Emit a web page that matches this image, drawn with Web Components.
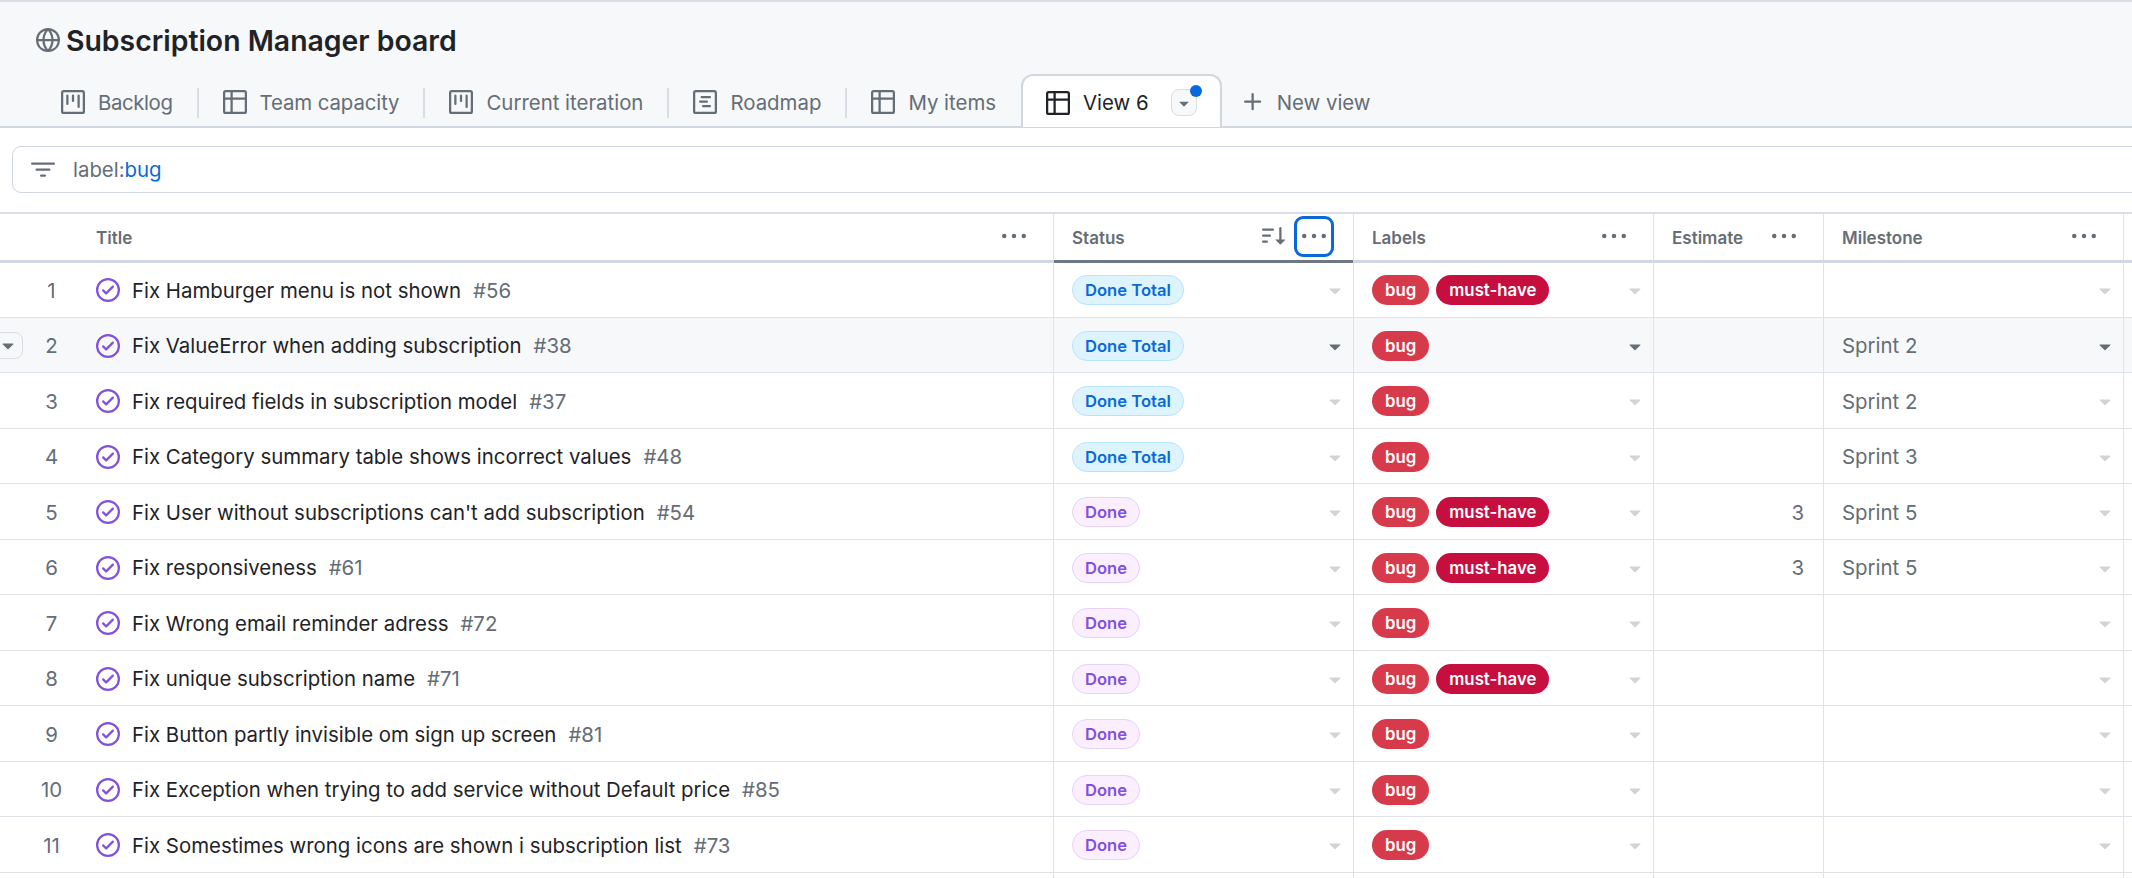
<!DOCTYPE html>
<html lang="en">
<head>
<meta charset="utf-8">
<title>Subscription Manager board</title>
<style>
  html, body { margin: 0; height: 878px; overflow: hidden; background: #fff; }
  body { font-family: Inter, "Liberation Sans", sans-serif; font-size: 20.4px; color: #1f2328; }
  view-tab:nth-child(1) { letter-spacing: -.4px; }
  view-tab:nth-child(2) { letter-spacing: -.1px; }
</style>
</head>
<body>
<board-header>Subscription Manager board</board-header>
<view-tabs>
  <view-tab icon="project">Backlog</view-tab>
  <view-tab icon="table">Team capacity</view-tab>
  <view-tab icon="project">Current iteration</view-tab>
  <view-tab icon="roadmap">Roadmap</view-tab>
  <view-tab icon="table" class="last">My items</view-tab>
  <view-tab icon="table" active>View 6</view-tab>
  <new-view>New view</new-view>
</view-tabs>
<filter-bar><span>label:</span><b>bug</b></filter-bar>
<issue-table>
  <issue-row n="1" issue="#56" status="Done Total" labels="bug,must-have">Fix Hamburger menu is not shown</issue-row>
  <issue-row n="2" issue="#38" status="Done Total" labels="bug" milestone="Sprint 2" hovered>Fix ValueError when adding subscription</issue-row>
  <issue-row n="3" issue="#37" status="Done Total" labels="bug" milestone="Sprint 2">Fix required fields in subscription model</issue-row>
  <issue-row n="4" issue="#48" status="Done Total" labels="bug" milestone="Sprint 3">Fix Category summary table shows incorrect values</issue-row>
  <issue-row n="5" issue="#54" status="Done" labels="bug,must-have" estimate="3" milestone="Sprint 5">Fix User without subscriptions can't add subscription</issue-row>
  <issue-row n="6" issue="#61" status="Done" labels="bug,must-have" estimate="3" milestone="Sprint 5">Fix responsiveness</issue-row>
  <issue-row n="7" issue="#72" status="Done" labels="bug">Fix Wrong email reminder adress</issue-row>
  <issue-row n="8" issue="#71" status="Done" labels="bug,must-have">Fix unique subscription name</issue-row>
  <issue-row n="9" issue="#81" status="Done" labels="bug">Fix Button partly invisible om sign up screen</issue-row>
  <issue-row n="10" issue="#85" status="Done" labels="bug">Fix Exception when trying to add service without Default price</issue-row>
  <issue-row n="11" issue="#73" status="Done" labels="bug">Fix Somestimes wrong icons are shown i subscription list</issue-row>
  <issue-row blank></issue-row>
</issue-table>

<script>
// octicons, 16 unit grid
const ICONS = {
  globe: 'M8 0a8 8 0 1 1 0 16A8 8 0 0 1 8 0ZM5.78 8.75a9.64 9.64 0 0 0 1.363 4.177c.255.426.542.832.857 1.215.245-.296.551-.705.857-1.215A9.64 9.64 0 0 0 10.22 8.75Zm4.44-1.5a9.64 9.64 0 0 0-1.363-4.177c-.307-.51-.612-.919-.857-1.215a9.927 9.927 0 0 0-.857 1.215A9.64 9.64 0 0 0 5.78 7.25Zm-5.944 1.5H1.543a6.507 6.507 0 0 0 4.666 5.5c-.123-.181-.24-.365-.352-.552-.715-1.192-1.437-2.874-1.581-4.948Zm-2.733-1.5h2.733c.144-2.074.866-3.756 1.58-4.948.12-.197.237-.381.353-.552a6.507 6.507 0 0 0-4.666 5.5Zm10.181 1.5c-.144 2.074-.866 3.756-1.58 4.948-.12.197-.237.381-.353.552a6.507 6.507 0 0 0 4.666-5.5Zm2.733-1.5a6.507 6.507 0 0 0-4.666-5.5c.123.181.24.365.353.552.714 1.192 1.436 2.874 1.58 4.948Z',
  project: 'M1.75 0h12.5C15.216 0 16 .784 16 1.75v12.5A1.75 1.75 0 0 1 14.25 16H1.75A1.75 1.75 0 0 1 0 14.25V1.75C0 .784.784 0 1.75 0ZM1.5 1.75v12.5c0 .138.112.25.25.25h12.5a.25.25 0 0 0 .25-.25V1.75a.25.25 0 0 0-.25-.25H1.75a.25.25 0 0 0-.25.25ZM11.75 3a.75.75 0 0 1 .75.75v7.5a.75.75 0 0 1-1.5 0v-7.5a.75.75 0 0 1 .75-.75Zm-8.25.75a.75.75 0 0 1 1.5 0v5.5a.75.75 0 0 1-1.5 0ZM8 3a.75.75 0 0 1 .75.75v3.5a.75.75 0 0 1-1.5 0v-3.5A.75.75 0 0 1 8 3Z',
  table: 'M0 1.75C0 .784.784 0 1.75 0h12.5C15.216 0 16 .784 16 1.75v12.5A1.75 1.75 0 0 1 14.25 16H1.75A1.75 1.75 0 0 1 0 14.25ZM6.5 6.5v8h7.75a.25.25 0 0 0 .25-.25V6.5Zm8-1.5V1.75a.25.25 0 0 0-.25-.25H6.5V5Zm-13 1.5v7.75c0 .138.112.25.25.25H5v-8ZM5 5V1.5H1.75a.25.25 0 0 0-.25.25V5Z',
  roadmap: 'M4.75 7a.75.75 0 0 0 0 1.5h4.5a.75.75 0 0 0 0-1.5h-4.5ZM5 4.75A.75.75 0 0 1 5.75 4h5.5a.75.75 0 0 1 0 1.5h-5.5A.75.75 0 0 1 5 4.75ZM6.75 10a.75.75 0 0 0 0 1.5h4.5a.75.75 0 0 0 0-1.5h-4.5ZM0 1.75C0 .784.784 0 1.75 0h12.5C15.216 0 16 .784 16 1.75v12.5A1.75 1.75 0 0 1 14.25 16H1.75A1.75 1.75 0 0 1 0 14.25ZM1.75 1.5a.25.25 0 0 0-.25.25v12.5c0 .138.112.25.25.25h12.5a.25.25 0 0 0 .25-.25V1.75a.25.25 0 0 0-.25-.25Z',
  filter: 'M.75 3h14.5a.75.75 0 0 1 0 1.5H.75a.75.75 0 0 1 0-1.5ZM3 7.75A.75.75 0 0 1 3.75 7h8.5a.75.75 0 0 1 0 1.5h-8.5A.75.75 0 0 1 3 7.75Zm3 4a.75.75 0 0 1 .75-.75h2.5a.75.75 0 0 1 0 1.5h-2.5a.75.75 0 0 1-.75-.75Z',
  plus: 'M7.75 2a.75.75 0 0 1 .75.75V7h4.25a.75.75 0 0 1 0 1.5H8.5v4.25a.75.75 0 0 1-1.5 0V8.5H2.75a.75.75 0 0 1 0-1.5H7V2.75A.75.75 0 0 1 7.75 2Z',
  kebab: 'M8 9.5a1.5 1.5 0 1 0 0-3 1.5 1.5 0 0 0 0 3ZM1.5 9.5a1.5 1.5 0 1 0 0-3 1.5 1.5 0 0 0 0 3Zm13 0a1.5 1.5 0 1 0 0-3 1.5 1.5 0 0 0 0 3Z',
  caret: 'm4.427 7.427 3.396 3.396a.25.25 0 0 0 .354 0l3.396-3.396A.25.25 0 0 0 11.396 7H4.604a.25.25 0 0 0-.177.427Z',
  check: 'M0 8a8 8 0 1 1 16 0A8 8 0 0 1 0 8Zm1.5 0a6.5 6.5 0 1 0 13 0 6.5 6.5 0 0 0-13 0Zm10.28-1.72-4.5 4.5a.75.75 0 0 1-1.06 0l-2-2a.751.751 0 0 1 .018-1.042.751.751 0 0 1 1.042-.018l1.47 1.47 3.97-3.97a.751.751 0 0 1 1.042.018.751.751 0 0 1 .018 1.042Z',
  sort: 'M0 3.75A.75.75 0 0 1 .75 3h6.5a.75.75 0 0 1 0 1.5H.75A.75.75 0 0 1 0 3.75Zm0 4A.75.75 0 0 1 .75 7h4.5a.75.75 0 0 1 0 1.5H.75A.75.75 0 0 1 0 7.75Zm0 4a.75.75 0 0 1 .75-.75h2.5a.75.75 0 0 1 0 1.5H.75a.75.75 0 0 1-.75-.75ZM12.25 2a.75.75 0 0 1 .75.75v7.5h2.2c.2 0 .3.25.17.4l-2.95 2.95a.25.25 0 0 1-.35 0L9.1 10.65a.23.23 0 0 1 .17-.4h2.23v-7.5a.75.75 0 0 1 .75-.75Z'
};

class GhIcon extends HTMLElement {
  constructor() {
    super();
    this.attachShadow({mode: 'open'});
    const size = this.getAttribute('size') || 24;
    this.shadowRoot.innerHTML = `
      <style>
        :host { display: block; flex: none; width: ${size}px; height: ${size}px; }
        svg { display: block; fill: currentColor; }
      </style>
      <svg width="${size}" height="${size}" viewBox="0 0 16 16"><path d="${ICONS[this.getAttribute('name')]}"/></svg>`;
  }
}
customElements.define('gh-icon', GhIcon);

class BoardHeader extends HTMLElement {
  constructor() {
    super();
    this.attachShadow({mode: 'open'});
    this.shadowRoot.innerHTML = `
      <style>
        :host {
          display: flex; align-items: center; gap: 6px;
          height: 72px; box-sizing: border-box;
          padding: 6px 0 0 36px;
          background: #f6f8fa;
          border-top: 2px solid #d8dee4;
        }
        gh-icon { color: #656d76; }
        h1 { margin: 0; font-size: 28.4px; font-weight: 600; color: #1f2328; }
      </style>
      <gh-icon name="globe"></gh-icon>
      <h1><slot></slot></h1>`;
  }
}
customElements.define('board-header', BoardHeader);

class ViewTabs extends HTMLElement {
  constructor() {
    super();
    this.attachShadow({mode: 'open'});
    this.shadowRoot.innerHTML = `
      <style>
        :host {
          display: flex; align-items: stretch;
          height: 56px; box-sizing: border-box;
          padding: 2px 0 0 36px;
          background: #f6f8fa;
          border-bottom: 2px solid #d0d7de;
        }
      </style>
      <slot></slot>`;
  }
}
customElements.define('view-tabs', ViewTabs);

class ViewTab extends HTMLElement {
  constructor() {
    super();
    this.attachShadow({mode: 'open'});
    this.shadowRoot.innerHTML = `
      <style>
        :host {
          display: flex; align-items: center; gap: 13px;
          position: relative;
          padding: 4px 25px 0;
          color: #656d76;
          white-space: nowrap;
        }
        /* separator between two tabs */
        :host(:not([active]):not(.last))::after {
          content: ''; position: absolute; right: -1px; top: 14px; bottom: 8px;
          width: 2px; background: #d8dee4;
        }
        :host([active]) {
          color: #1f2328;
          background: #fff;
          border: 2px solid #d0d7de;
          border-bottom: 0;
          border-radius: 12px 12px 0 0;
          margin-bottom: -2px;
          padding: 2px 23px 0;
          height: 53px;
          box-sizing: border-box;
          align-self: flex-start;
        }
        .menu {
          position: relative; width: 26px; height: 27px; margin-left: 9px;
          box-sizing: border-box;
          background: #f6f8fa;
          border: 1px solid #d8dee4; border-radius: 8px;
          display: flex; align-items: center; justify-content: center;
          color: #656d76;
        }
        .menu i {
          position: absolute; right: -6px; top: -5px;
          width: 12px; height: 12px; border-radius: 50%; background: #0969da;
        }
      </style>
      <gh-icon name="${this.getAttribute('icon')}"></gh-icon>
      <slot></slot>
      ${this.hasAttribute('active') ? '<span class="menu"><gh-icon name="caret" size="20"></gh-icon><i></i></span>' : ''}`;
  }
}
customElements.define('view-tab', ViewTab);

class NewView extends HTMLElement {
  constructor() {
    super();
    this.attachShadow({mode: 'open'});
    this.shadowRoot.innerHTML = `
      <style>
        :host {
          display: flex; align-items: center; gap: 12px;
          padding: 4px 0 0 19px;
          color: #656d76; white-space: nowrap;
        }
      </style>
      <gh-icon name="plus"></gh-icon>
      <slot></slot>`;
  }
}
customElements.define('new-view', NewView);

class FilterBar extends HTMLElement {
  constructor() {
    super();
    this.attachShadow({mode: 'open'});
    this.shadowRoot.innerHTML = `
      <style>
        :host {
          display: flex; align-items: center; gap: 18px;
          height: 47px; box-sizing: border-box;
          margin: 18px -20px 19px 12px;
          padding-left: 18px;
          border: 1px solid #d0d7de; border-radius: 9px;
          background: #fff;
        }
        gh-icon { color: #656d76; }
        .query { color: #656d76; }
        ::slotted(b) { font-weight: 400; color: #0969da; }
      </style>
      <gh-icon name="filter"></gh-icon>
      <span class="query"><slot></slot></span>`;
  }
}
customElements.define('filter-bar', FilterBar);

class StatusPill extends HTMLElement {
  constructor() {
    super();
    this.attachShadow({mode: 'open'});
    this.shadowRoot.innerHTML = `
      <style>
        :host {
          display: inline-flex; align-items: center;
          height: 30px; box-sizing: border-box;
          padding: 0 12px;
          border-radius: 15px;
          border: 1px solid #e6d2fb;
          background: #fbefff;
          color: #8250df;
          font-size: 16.6px; font-weight: 600; white-space: nowrap;
        }
        :host(.total) { background: #ddf4ff; border-color: #b6e3ff; color: #0969da; }
      </style>
      <slot></slot>`;
  }
}
customElements.define('status-pill', StatusPill);

class LabelPill extends HTMLElement {
  constructor() {
    super();
    this.attachShadow({mode: 'open'});
    this.shadowRoot.innerHTML = `
      <style>
        :host {
          display: inline-flex; align-items: center;
          height: 30px; box-sizing: border-box;
          padding: 0 13px;
          border-radius: 15px;
          background: #d73a4a;
          color: #fff;
          font-size: 16.8px; font-weight: 600; white-space: nowrap;
        }
        :host(.must) { background: #c60f3f; }
      </style>
      <slot></slot>`;
  }
}
customElements.define('label-pill', LabelPill);

class IssueTable extends HTMLElement {
  constructor() {
    super();
    this.attachShadow({mode: 'open'});
    this.shadowRoot.innerHTML = `
      <style>
        :host {
          display: block;
          --cols: 96px 957px 300px 300px 170px 300px 1fr;
          --line: #dfe3e8;
        }
        .head {
          display: grid; grid-template-columns: var(--cols);
          height: 51px; box-sizing: border-box;
          margin-bottom: -1px;
          border-top: 2px solid #d8dee4;
          border-bottom: 3px solid #d0d7de;
          font-size: 17px; font-weight: 600; color: #656d76;
        }
        .th {
          position: relative;
          display: flex; align-items: center;
          border-left: 1px solid var(--line);
          padding-left: 18px; padding-right: 19px;
        }
        .th.title { border-left: 0; padding-left: 0; }
        .th span { padding-top: 2px; }
        .kebab {
          display: flex; align-items: center; justify-content: center;
          margin-left: auto;
          width: 40px; height: 41px; box-sizing: border-box; margin-top: -2px;
          border-radius: 9px;
        }
        .sorted { margin-left: auto; margin-right: 8px; margin-top: -2px; }
        .sorted + .kebab { margin-left: 0; border: 3px solid #0969da; }
        .th.active::after {
          content: ''; position: absolute; left: 0; right: 0; bottom: -3px; height: 3px;
          background: #6e7781;
        }
      </style>
      <div class="head">
        <div></div>
        <div class="th title"><span>Title</span><div class="kebab"><gh-icon name="kebab"></gh-icon></div></div>
        <div class="th active"><span>Status</span><gh-icon class="sorted" name="sort"></gh-icon><div class="kebab"><gh-icon name="kebab"></gh-icon></div></div>
        <div class="th"><span>Labels</span><div class="kebab"><gh-icon name="kebab"></gh-icon></div></div>
        <div class="th"><span>Estimate</span><div class="kebab"><gh-icon name="kebab"></gh-icon></div></div>
        <div class="th"><span>Milestone</span><div class="kebab"><gh-icon name="kebab"></gh-icon></div></div>
        <div class="th"></div>
      </div>
      <slot></slot>`;
  }
}
customElements.define('issue-table', IssueTable);

class IssueRow extends HTMLElement {
  constructor() {
    super();
    this.attachShadow({mode: 'open'});
    const attr = name => this.getAttribute(name) || '';
    const blank = this.hasAttribute('blank');
    const status = attr('status');
    const labels = attr('labels').split(',').filter(Boolean);
    const caret = blank ? '' : '<gh-icon class="caret" name="caret"></gh-icon>';
    this.shadowRoot.innerHTML = `
      <style>
        :host {
          display: grid; grid-template-columns: var(--cols);
          height: 55.5px; box-sizing: border-box;
          border-bottom: 1px solid var(--line);
          position: relative;
        }
        :host([blank]) { height: 5.5px; border-bottom: 0; }
        :host([hovered]) { background: #f6f8fa; }
        .cell {
          display: flex; align-items: center; min-width: 0;
          border-left: 1px solid var(--line);
          padding: 2px 6px 0 18px;
          color: #656d76;
        }
        :host([blank]) .cell { padding-top: 0; }
        .num { border: 0; padding: 2px 0 0 7px; justify-content: center; }
        .title { border: 0; padding: 2px 0 0; gap: 12px; color: #1f2328; white-space: nowrap; }
        .title .done { color: #8250df; }
        .title em { font-style: normal; color: #656d76; }
        .labels { gap: 7px; }
        .est { justify-content: flex-end; padding-right: 19px; }
        .caret { margin-left: auto; color: #d0d3d7; }
        :host([hovered]) .caret { color: #656d76; }
        .grip {
          position: absolute; left: -12px; top: 14px;
          width: 35px; height: 27px; box-sizing: border-box;
          display: flex; align-items: center; justify-content: flex-end; padding-right: 2px;
          border: 1px solid #d8dee4; border-radius: 8px; background: #f6f8fa; color: #656d76;
        }
      </style>
      ${this.hasAttribute('hovered') ? '<div class="grip"><gh-icon name="caret"></gh-icon></div>' : ''}
      <div class="cell num">${attr('n')}</div>
      <div class="cell title">
        ${blank ? '' : `<gh-icon class="done" name="check"></gh-icon><span><slot></slot></span><em>${attr('issue')}</em>`}
      </div>
      <div class="cell">${status ? `<status-pill class="${status === 'Done Total' ? 'total' : ''}">${status}</status-pill>` : ''}${caret}</div>
      <div class="cell labels">${labels.map(l => `<label-pill class="${l === 'must-have' ? 'must' : ''}">${l}</label-pill>`).join('')}${caret}</div>
      <div class="cell est">${attr('estimate')}</div>
      <div class="cell">${attr('milestone')}${caret}</div>
      <div class="cell"></div>`;
  }
}
customElements.define('issue-row', IssueRow);
</script>
</body>
</html>
